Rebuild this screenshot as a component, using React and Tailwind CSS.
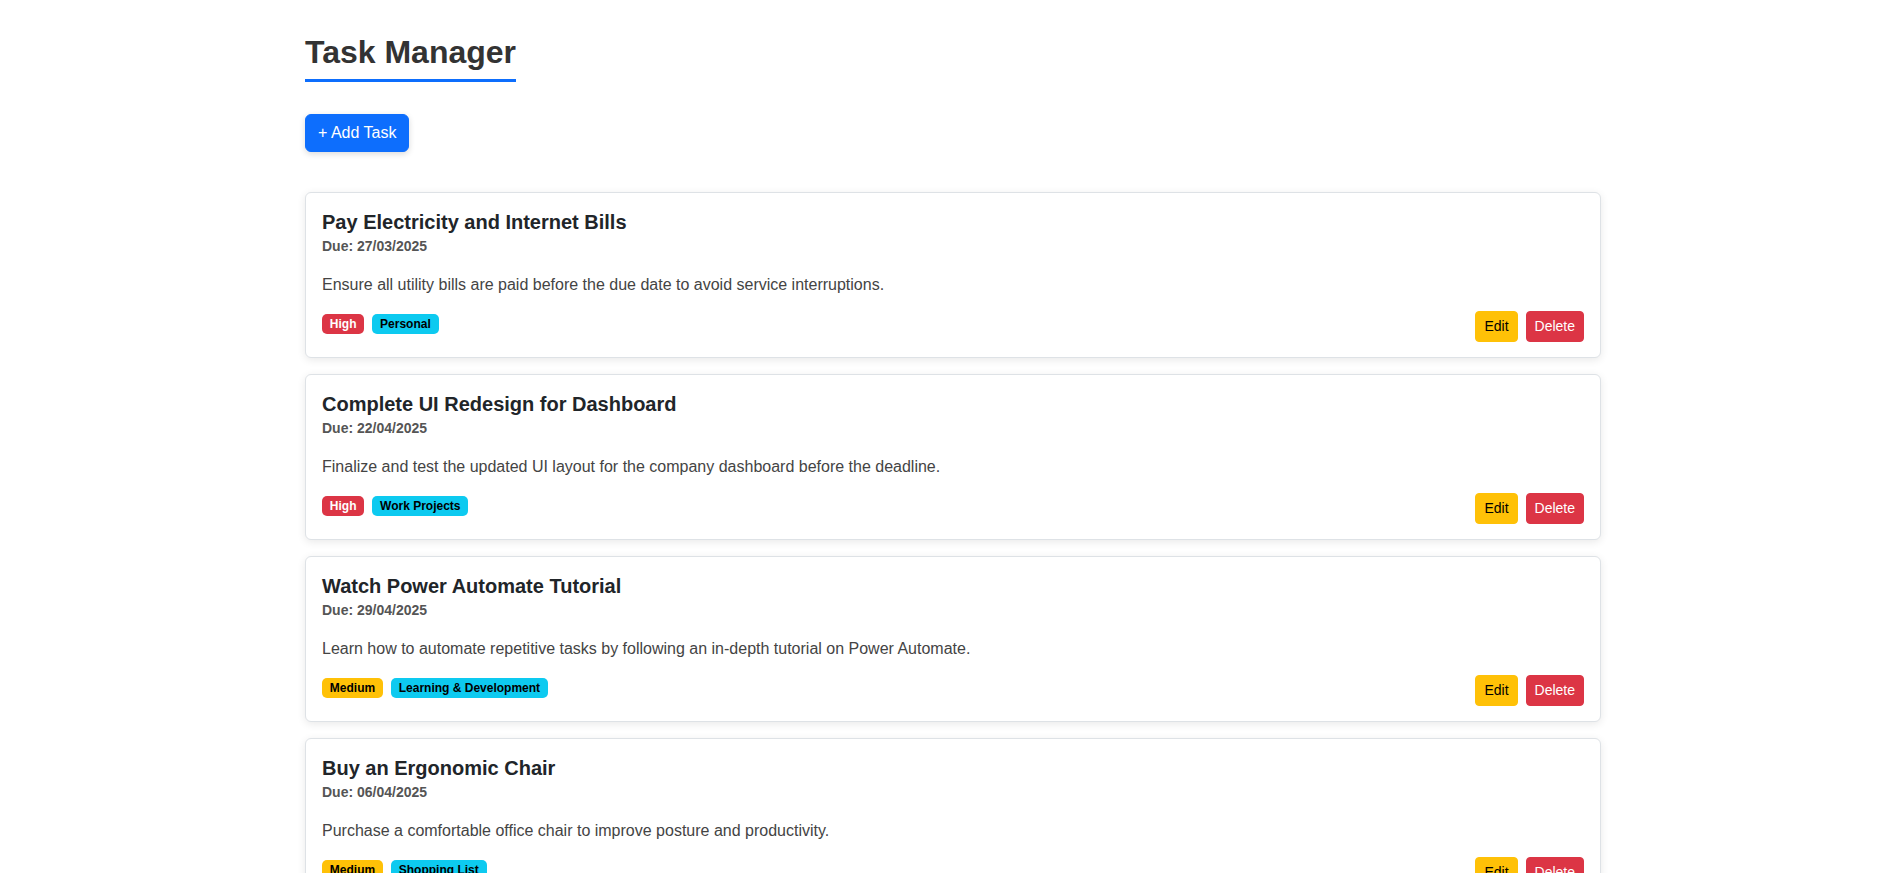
const tasks = [
  {
    id: 1,
    title: "Pay Electricity and Internet Bills",
    due: "27/03/2025",
    description: "Ensure all utility bills are paid before the due date to avoid service interruptions.",
    priority: "High",
    category: "Personal",
  },
  {
    id: 2,
    title: "Complete UI Redesign for Dashboard",
    due: "22/04/2025",
    description: "Finalize and test the updated UI layout for the company dashboard before the deadline.",
    priority: "High",
    category: "Work Projects",
  },
  {
    id: 3,
    title: "Watch Power Automate Tutorial",
    due: "29/04/2025",
    description: "Learn how to automate repetitive tasks by following an in-depth tutorial on Power Automate.",
    priority: "Medium",
    category: "Learning & Development",
  },
  {
    id: 4,
    title: "Buy an Ergonomic Chair",
    due: "06/04/2025",
    description: "Purchase a comfortable office chair to improve posture and productivity.",
    priority: "Medium",
    category: "Shopping List",
  },
];

const priorityClass = {
  High: "bg-[#dc3545] text-white",
  Medium: "bg-[#ffc107] text-[#000]",
  Low: "bg-[#198754] text-white",
};

const TaskCard = ({ task }) => {
  return (
    <div className="mb-4 rounded-[6px] border border-[#dee2e6] bg-white px-4 pt-[17px] pb-[15px] shadow-[0_2px_8px_rgba(0,0,0,0.09)]">
      <h5 className="mb-[2px] text-[20px] font-bold leading-[24px] text-[#212529]">{task.title}</h5>
      <div className="mb-4 text-[14px] font-bold leading-[21px] text-[#555]">Due: {task.due}</div>
      <p className="mb-[14px] text-[16px] leading-[24px] text-[#444]">{task.description}</p>
      <div className="flex items-start justify-between">
        <div className="mt-[3px] flex gap-2">
          <span className={`rounded-[5px] px-[7.8px] py-[4px] text-[12px] font-bold leading-[12px] ${priorityClass[task.priority]}`}>
            {task.priority}
          </span>
          <span className="rounded-[5px] bg-[#0dcaf0] px-[7.8px] py-[4px] text-[12px] font-bold leading-[12px] text-[#000]">
            {task.category}
          </span>
        </div>
        <div className="flex gap-2">
          <button className="rounded-[4px] border border-[#ffc107] bg-[#ffc107] px-2 py-1 text-[14px] leading-[21px] text-[#000]">
            Edit
          </button>
          <button className="rounded-[4px] border border-[#dc3545] bg-[#dc3545] px-2 py-1 text-[14px] leading-[21px] text-white">
            Delete
          </button>
        </div>
      </div>
    </div>
  );
};

export default function App() {
  return (
    <div className="min-h-screen bg-white font-['Liberation_Sans',Arial,sans-serif] text-[#212529]">
      <div className="mx-auto w-full max-w-[1320px] pl-[13px] pr-[11px] pt-[33px]">
        <h1 className="inline-block border-b-[3px] border-[#0d6efd] pb-2 text-[32px] font-bold leading-[38px] text-[#333]">
          Task Manager
        </h1>
        <div className="mt-8">
          <button className="rounded-[6px] border border-[#0d6efd] bg-[#0d6efd] px-3 py-[6px] text-[16px] leading-[24px] text-white shadow-[0_2px_6px_rgba(0,0,0,0.15)]">
            + Add Task
          </button>
        </div>
        <div className="mt-10">
          {tasks.map((task) => (
            <TaskCard key={task.id} task={task} />
          ))}
        </div>
      </div>
    </div>
  );
}
